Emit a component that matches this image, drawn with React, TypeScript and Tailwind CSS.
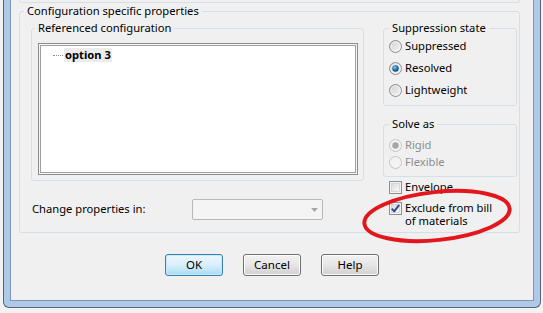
import React from "react";

const font = { fontFamily: '"Noto Sans", "Open Sans", sans-serif' };

function Radio({ checked = false, disabled = false }: { checked?: boolean; disabled?: boolean }) {
  return (
    <svg width="13" height="13" viewBox="0 0 13 13" className="shrink-0">
      <defs>
        <linearGradient id="rfill" x1="0" y1="0" x2="1" y2="1">
          <stop offset="0" stopColor="#cfcfcf" />
          <stop offset="1" stopColor="#f7f7f7" />
        </linearGradient>
        <radialGradient id="rdot" cx="0.4" cy="0.35" r="0.7">
          <stop offset="0" stopColor="#8fd0f4" />
          <stop offset="0.5" stopColor="#1f77b5" />
          <stop offset="1" stopColor="#0c3f6b" />
        </radialGradient>
      </defs>
      <circle cx="6.5" cy="6.5" r="6" fill={disabled ? "#f3f3f3" : "url(#rfill)"} stroke={disabled ? "#c4c4c4" : "#8e8f8f"} />
      <circle cx="6.5" cy="6.5" r="4.5" fill="none" stroke={disabled ? "#f0f0f0" : "#f4f4f4"} strokeWidth="0.8" />
      {checked && <circle cx="6.5" cy="6.5" r="3.2" fill={disabled ? "#a7a7a7" : "url(#rdot)"} />}
    </svg>
  );
}

function Check({ checked = false }: { checked?: boolean }) {
  return (
    <svg width="13" height="13" viewBox="0 0 13 13" className="shrink-0">
      <defs>
        <linearGradient id="cfill" x1="0" y1="0" x2="1" y2="1">
          <stop offset="0" stopColor="#d9d9d9" />
          <stop offset="1" stopColor="#fbfbfb" />
        </linearGradient>
      </defs>
      <rect x="0.5" y="0.5" width="12" height="12" fill="#f4f4f4" stroke="#8e8f8f" />
      <rect x="2.5" y="2.5" width="8" height="8" fill="url(#cfill)" stroke="#c7c7c7" strokeWidth="0.6" />
      {checked && (
        <path d="M2.8 6.6 L5.2 9.3 L10.2 2.8" fill="none" stroke="#2e4a8a" strokeWidth="1.9" strokeLinejoin="round" />
      )}
    </svg>
  );
}

function Btn({ label, primary = false }: { label: string; primary?: boolean }) {
  return (
    <button
      className={
        primary
          ? "w-[58px] h-[22px] rounded-[3px] border border-[#3c7fb1] bg-gradient-to-b from-[#eaf6fd] via-[#d9f0fc] to-[#a7d9f5] text-[11.5px] text-black shadow-[inset_0_0_0_1px_#c9eafd]"
          : "w-[58px] h-[22px] rounded-[3px] border border-[#707070] bg-gradient-to-b from-[#f2f2f2] via-[#e6e6e6] to-[#cfcfcf] text-[11.5px] text-black shadow-[inset_0_0_0_1px_#fcfcfc]"
      }
    >
      {label}
    </button>
  );
}

export default function App() {
  return (
    <div className="relative flex w-[543px] h-[313px] overflow-hidden bg-[#f3f3f3] text-[11.2px] text-black" style={font}>
      <div className="w-[3px] shrink-0" />
      <div className="w-[538px] h-[308px] shrink-0 rounded-b-[6px] border-x border-b border-[#56657a] bg-[#aecae8] px-[6px] pb-[6px]">
        <div className="flex h-[301px] flex-col border-x border-b border-[#7c96b6] bg-[#f0f0f0]">
          <div className="ml-[8px] h-[3px] w-[501px] rounded-b-[3px] border-x border-b border-[#d5dfe5]" />

          <fieldset className="ml-[8px] h-[230px] w-[501px] rounded-[3px] border border-[#d5dfe5]">
            <legend className="ml-[4px] px-[3px] leading-[16px]">Configuration specific properties</legend>
            <div className="flex">
              <div className="ml-[11px] flex w-[333px] flex-col">
                <fieldset className="mt-[1px] h-[161px] w-[333px] rounded-[3px] border border-[#d5dfe5]">
                  <legend className="ml-[3px] px-[3px] leading-[16px]">Referenced configuration</legend>
                  <div className="ml-[6px] mt-[7px] h-[132px] w-[320px] border border-[#8c8c8c] bg-[#f7f7f7] p-[1px]">
                    <div className="h-full w-full border border-[#a0a0a0] bg-white">
                      <div className="ml-[12px] mt-[2px] flex items-center">
                        <span className="w-[10px] border-t border-dotted border-[#8a8a8a]" />
                        <span className="ml-[1px] bg-[#ececec] px-[1px] font-bold leading-[14px]">option 3</span>
                      </div>
                    </div>
                  </div>
                </fieldset>
                <div className="mt-[18px] flex h-[21px] items-center">
                  <span className="ml-[1px] w-[160px]">Change properties in:</span>
                  <div className="flex h-[21px] w-[131px] items-center justify-end rounded-[2px] border border-[#b5b8bc] bg-[#f4f4f4] pr-[4px]">
                    <svg width="7" height="4" viewBox="0 0 7 4">
                      <path d="M0 0 H7 L3.5 4 Z" fill="#a8a8a8" />
                    </svg>
                  </div>
                </div>
              </div>

              <div className="ml-[19px] flex w-[134px] flex-col">
                <fieldset className="mt-[1px] h-[86px] w-[134px] rounded-[3px] border border-[#d5dfe5]">
                  <legend className="ml-[5px] px-[3px] leading-[16px]">Suppression state</legend>
                  <div className="flex flex-col gap-[2px] pl-[5px]">
                    <label className="flex h-[20px] items-center gap-[3px]"><Radio />Suppressed</label>
                    <label className="flex h-[20px] items-center gap-[3px]"><Radio checked />Resolved</label>
                    <label className="flex h-[20px] items-center gap-[3px]"><Radio />Lightweight</label>
                  </div>
                </fieldset>
                <fieldset className="mt-[10px] h-[61px] w-[134px] rounded-[3px] border border-[#d5dfe5]">
                  <legend className="ml-[5px] px-[3px] leading-[16px]">Solve as</legend>
                  <div className="mt-[5px] flex flex-col pl-[5px] text-[#8d8d8d]">
                    <label className="flex h-[17px] items-center gap-[3px]"><Radio checked disabled />Rigid</label>
                    <label className="flex h-[17px] items-center gap-[3px]"><Radio disabled />Flexible</label>
                  </div>
                </fieldset>
                <label className="mt-[2px] flex h-[16px] items-center gap-[3px] pl-[6px]"><Check />Envelope</label>
                <label className="mt-[6px] flex items-start gap-[3px] pl-[6px] leading-[13px]">
                  <span className="pt-[1px]"><Check checked /></span>
                  <span>Exclude from bill<br />of materials</span>
                </label>
              </div>
            </div>
          </fieldset>

          <div className="ml-[154px] mt-[21px] flex gap-[20px]">
            <Btn label="OK" primary />
            <Btn label="Cancel" />
            <Btn label="Help" />
          </div>
        </div>
      </div>

      <svg className="pointer-events-none absolute left-0 top-0" width="543" height="313" viewBox="0 0 543 313">
        <ellipse cx="437" cy="216" rx="73" ry="24" transform="rotate(-6 437 216)" fill="none" stroke="#e3161d" strokeWidth="4" />
      </svg>
    </div>
  );
}
